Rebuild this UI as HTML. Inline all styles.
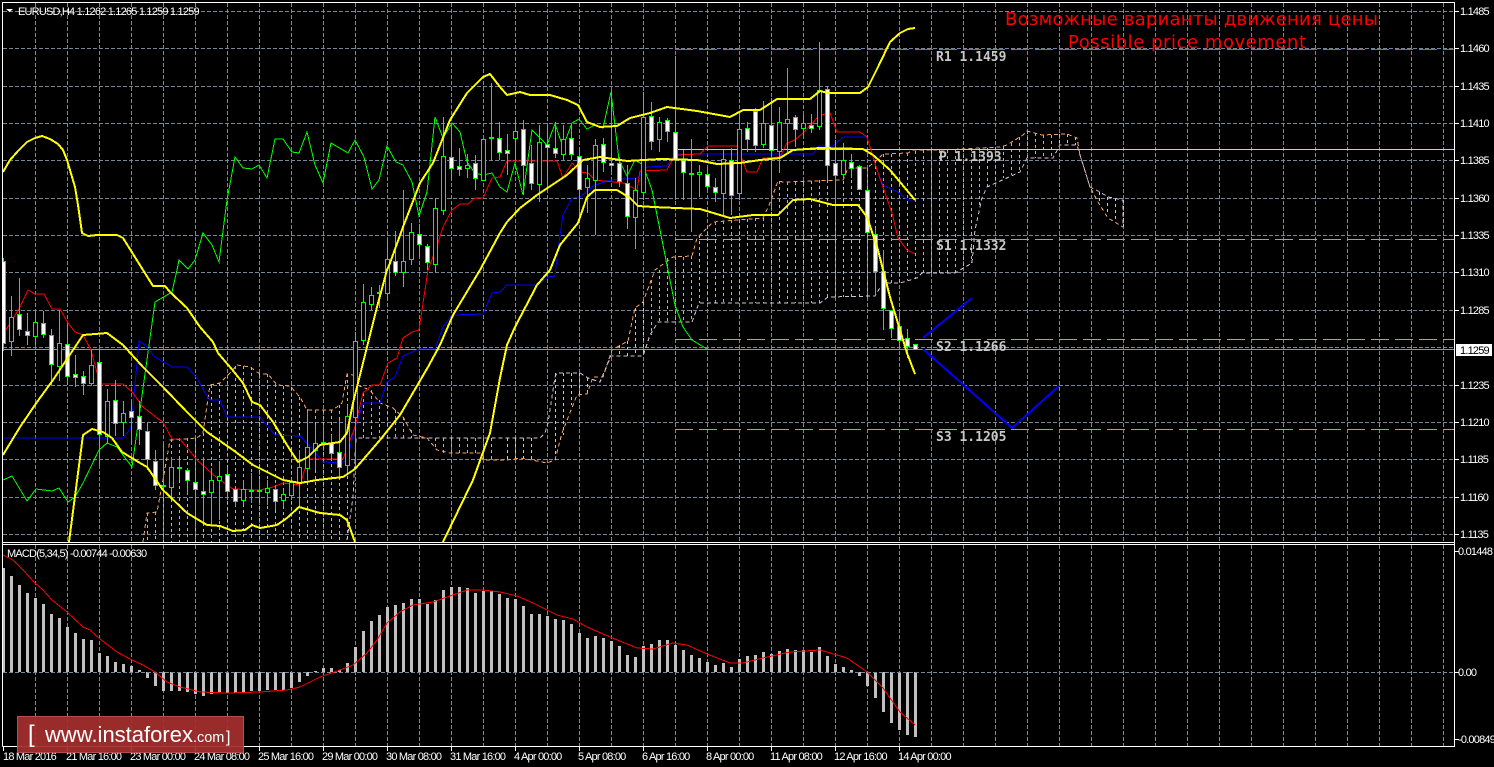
<!DOCTYPE html>
<html><head><meta charset="utf-8"><style>
html,body{margin:0;padding:0;background:#000;width:1494px;height:767px;overflow:hidden}
svg{display:block}
.ax{font:11px "Liberation Sans",sans-serif;fill:#fff;letter-spacing:-.8px}
.sr{font:bold 13px "DejaVu Sans Mono","Liberation Mono",monospace;fill:#c8c8c8}
</style></head><body>
<svg width="1494" height="767" viewBox="0 0 1494 767" xmlns="http://www.w3.org/2000/svg">
<defs><clipPath id="m"><rect x="3" y="3" width="1451" height="539"/></clipPath></defs>
<rect width="1494" height="767" fill="#000"/>
<!-- grid -->
<g fill="none" stroke="#778899" stroke-dasharray="4 2" shape-rendering="crispEdges">
<path d="M3 11.5H1454M3 48.5H1454M3 86.5H1454M3 123.5H1454M3 160.5H1454M3 198.5H1454M3 235.5H1454M3 272.5H1454M3 310.5H1454M3 347.5H1454M3 385.5H1454M3 422.5H1454M3 459.5H1454M3 497.5H1454M3 534.5H1454M3 672.5H1454"/>
<path d="M35.5 3V542M67.5 3V542M99.5 3V542M131.5 3V542M163.5 3V542M195.5 3V542M227.5 3V542M259.5 3V542M291.5 3V542M323.5 3V542M355.5 3V542M387.5 3V542M419.5 3V542M451.5 3V542M483.5 3V542M515.5 3V542M547.5 3V542M579.5 3V542M611.5 3V542M643.5 3V542M675.5 3V542M707.5 3V542M739.5 3V542M771.5 3V542M803.5 3V542M835.5 3V542M867.5 3V542M899.5 3V542M931.5 3V542M963.5 3V542M995.5 3V542M1027.5 3V542M1059.5 3V542M1091.5 3V542M1123.5 3V542M1155.5 3V542M1187.5 3V542M1219.5 3V542M1251.5 3V542M1283.5 3V542M1315.5 3V542M1347.5 3V542M1379.5 3V542M1411.5 3V542M1443.5 3V542"/>
<path d="M35.5 545V746M67.5 545V746M99.5 545V746M131.5 545V746M163.5 545V746M195.5 545V746M227.5 545V746M259.5 545V746M291.5 545V746M323.5 545V746M355.5 545V746M387.5 545V746M419.5 545V746M451.5 545V746M483.5 545V746M515.5 545V746M547.5 545V746M579.5 545V746M611.5 545V746M643.5 545V746M675.5 545V746M707.5 545V746M739.5 545V746M771.5 545V746M803.5 545V746M835.5 545V746M867.5 545V746M899.5 545V746M931.5 545V746M963.5 545V746M995.5 545V746M1027.5 545V746M1059.5 545V746M1091.5 545V746M1123.5 545V746M1155.5 545V746M1187.5 545V746M1219.5 545V746M1251.5 545V746M1283.5 545V746M1315.5 545V746M1347.5 545V746M1379.5 545V746M1411.5 545V746M1443.5 545V746"/>
</g>
<g clip-path="url(#m)" fill="none">
<!-- cloud hatch -->
<path stroke="#f4a460" stroke-dasharray="3 3" shape-rendering="crispEdges" d="M147.5 513V542M155.5 512V542M163.5 480V542M171.5 439V542M179.5 438V542M187.5 438V542M195.5 438V542M203.5 433V542M211.5 385V542M219.5 383V542M227.5 375V542M235.5 366V542M243.5 366V542M251.5 367V542M259.5 374V542M267.5 374V542M275.5 384V542M283.5 386V542M291.5 387V542M299.5 397V542M307.5 410V542M315.5 410V542M323.5 410V542M331.5 410V542M339.5 405V542M347.5 374V542M363.5 393V438M371.5 390V438M379.5 400V438M387.5 405V438M395.5 410V438M403.5 417V438M411.5 430V438M435.5 438V450M443.5 438V453M451.5 438V453M459.5 438V453M467.5 438V453M475.5 438V453M483.5 438V460M491.5 438V461M651.5 280V335M659.5 270V322M667.5 258V322M675.5 257V322M683.5 257V322M691.5 256V322M699.5 235V303M707.5 226V303M715.5 222V303M723.5 221V303M731.5 220V303M739.5 220V303M747.5 219V303M755.5 218V303M763.5 218V303M771.5 200V303M779.5 181V303M787.5 182V303M795.5 182V303M803.5 182V303M811.5 181V303M819.5 180V303M827.5 180V298M835.5 180V297M843.5 175V297M851.5 168V297M859.5 168V297M867.5 168V297M875.5 160V296M883.5 154V283M891.5 154V283M899.5 153V283M907.5 153V280M915.5 151V278M923.5 150V273M931.5 150V273M939.5 150V273M947.5 150V273M955.5 150V273M963.5 149V268M971.5 148V263M979.5 148V208M987.5 148V187M995.5 147V183M1003.5 146V178M1011.5 143V175M1019.5 137V172M1027.5 131V158M1035.5 133V158M1043.5 135V158M1051.5 135V158"/>
<path stroke="#d8bfd8" stroke-dasharray="3 3" shape-rendering="crispEdges" d="M507.5 438V460M515.5 438V460M523.5 438V458M531.5 438V460M555.5 373V460M563.5 373V435M571.5 373V405M579.5 373V395M587.5 378V394M619.5 345V356M627.5 341V356M635.5 308V356M643.5 302V356M1059.5 134V145M1067.5 134V145M1075.5 137V145M1099.5 192V203M1107.5 197V215M1115.5 198V222M1123.5 200V227"/>
<!-- cloud edges -->
<polyline stroke="#f4a460" stroke-dasharray="4 3" shape-rendering="crispEdges" points="143,542 147,513 157,512 163,480 170,440 197,438 203,433 210,385 220,383 230,373 237,365 250,367 260,374 268,374 277,385 290,386 300,397 307,410 333,410 342,403 347,374 353,375 357,385 370,390 380,403 393,408 403,417 413,435 427,438 437,450 450,453 480,453 483,460 507,460 520,458 532,460 547,463 555,460 562,433 577,395 587,394 593,377 603,377 612,350 628,341 635,308 643,302 655,270 673,257 692,256 697,238 713,222 763,218 770,203 778,181 783,182 843,180 848,168 867,168 877,160 883,154 908,153 913,150 943,150 1000,147 1007,145 1023,135 1027,131 1042,135 1067,134 1077,138 1080,155 1090,187 1098,202 1108,218 1123,227"/>
<polyline stroke="#d8bfd8" stroke-dasharray="4 3" shape-rendering="crispEdges" points="347,540 353,497 356,438 540,438 545,433 548,423 555,377 557,373 580,373 588,378 600,382 605,370 611,356 643,356 650,335 658,322 692,322 699,303 820,303 828,297 875,296 883,283 900,283 917,278 922,273 955,273 972,263 975,230 982,198 987,187 1020,172 1027,158 1053,158 1060,145 1077,145 1080,155 1090,187 1100,192 1108,197 1123,200 1123,227"/>
<!-- chikou -->
<polyline stroke="#00ff00" shape-rendering="crispEdges" points="3,480 12,476 27,501 36,489 52,491 59,488 68,502 75,497 83,483 99,450 107,443 117,447 132,467 140,410 155,302 172,292 177,270 179,260 188,269 195,260 203,233 212,245 219,262 227,200 235,157 243,168 252,169 259,165 267,178 275,139 283,139 292,152 299,153 307,132 315,165 323,183 331,143 348,153 355,140 364,157 372,189 379,180 387,146 396,162 403,165 412,182 419,216 427,192 435,117 443,138 452,123 460,132 467,162 475,173 483,175 492,173 500,187 507,192 515,163 523,195 532,130 539,137 547,145 555,124 563,147 572,123 579,119 587,129 595,125 603,128 611,92 619,160 627,176 635,160 643,165 652,190 668,270 675,305 683,327 692,340 707,349"/>
<!-- S/R levels -->
<path shape-rendering="crispEdges" stroke="#e2501e" stroke-dasharray="18 6" d="M675 49.5H1454"/>
<path shape-rendering="crispEdges" stroke="#b89a90" stroke-dasharray="18 6" d="M675 239.5H1454M675 339.5H1454M675 429.5H1454"/>
<path shape-rendering="crispEdges" stroke="#ffd700" d="M675 149.5H1454"/>
<path shape-rendering="crispEdges" stroke="#8f979f" d="M3 349.5H1454"/>
<!-- blue kijun -->
<polyline stroke="#0000ff" shape-rendering="crispEdges" points="3,438 123,438 131,428 139,341 145,345 155,357 172,367 187,367 197,378 205,393 210,400 220,400 227,417 260,417 275,435 300,436 315,452 323,462 340,463 347,460 355,427 363,403 380,403 387,382 395,377 403,356 419,349 435,349 443,327 452,315 483,314 492,293 500,292 507,285 538,285 548,277 555,276 557,257 563,215 572,198 580,197 595,185 610,180 637,178 647,167 667,166 675,154 813,154 819,146 833,146 843,137 867,137 877,170 883,185 898,192 908,200 915,200"/>
<!-- red tenkan -->
<polyline stroke="#ff0000" shape-rendering="crispEdges" points="6,330 20,307 28,290 35,294 44,294 52,309 60,309 68,323 75,332 83,335 91,350 100,384 123,384 133,393 143,407 157,418 163,422 172,439 180,439 197,460 217,478 233,489 260,490 273,487 283,483 300,485 308,459 343,459 355,427 363,393 372,385 380,385 388,363 397,358 403,338 412,332 419,330 425,290 428,270 433,257 438,243 443,227 452,210 460,204 468,204 475,198 483,198 492,178 500,177 507,161 557,161 563,178 572,163 580,172 588,173 595,180 623,183 637,190 640,171 667,170 675,155 700,154 708,146 737,146 747,172 757,172 763,158 780,157 787,143 795,140 803,133 820,115 830,113 837,132 860,132 867,137 877,170 883,187 892,213 898,238 907,250 915,254"/>
<!-- wicks -->
<path stroke="#00ff00" shape-rendering="crispEdges" d="M3.5 258V351M11.5 296V356M19.5 278V336M27.5 313V345M35.5 311V345M43.5 311V338M51.5 329V385M59.5 310V381M67.5 325V385M75.5 355V387M83.5 371V395M91.5 350V386M99.5 350V465M107.5 389V444M115.5 380V436M123.5 401V436M131.5 400V445M139.5 401V445M147.5 423V470M155.5 450V490M163.5 443V498M171.5 457V497M179.5 459V480M187.5 468V495M195.5 470V525M203.5 457V522M211.5 468V526M219.5 461V520M227.5 467V500M235.5 487V507M243.5 480V505M251.5 473V503M259.5 481V500M267.5 480V505M275.5 485V510M283.5 490V507M291.5 478V500M299.5 450V505M307.5 409V480M315.5 425V470M323.5 427V445M331.5 435V460M339.5 420V477M347.5 405V475M355.5 332V468M363.5 284V345M371.5 287V310M379.5 285V308M387.5 240V300M395.5 231V276M403.5 190V287M411.5 223V265M419.5 224V257M427.5 244V270M435.5 198V272M443.5 117V215M451.5 125V180M459.5 148V176M467.5 154V178M475.5 155V190M483.5 139V181M491.5 83V160M499.5 122V160M507.5 134V175M515.5 120V160M523.5 120V195M531.5 145V190M539.5 125V202M547.5 125V183M555.5 122V158M563.5 125V160M571.5 125V160M579.5 147V222M587.5 165V213M595.5 139V235M603.5 138V172M611.5 90V172M619.5 157V187M627.5 165V229M635.5 178V249M643.5 92V200M651.5 102V150M659.5 117V152M667.5 118V142M675.5 56V200M683.5 150V200M691.5 139V232M699.5 165V197M707.5 167V190M715.5 178V202M723.5 150V215M731.5 148V215M739.5 112V200M747.5 122V152M755.5 108V152M763.5 101V148M771.5 98V208M779.5 107V173M787.5 68V152M795.5 115V147M803.5 115V138M811.5 114V133M819.5 42V130M827.5 86V180M835.5 140V220M843.5 143V180M851.5 154V178M859.5 165V190M867.5 190V235M875.5 228V296M883.5 250V330M891.5 310V338M899.5 313V347M907.5 329V358M915.5 344V349"/>
<!-- black bodies -->
<path fill="#000" stroke="#00ff00" shape-rendering="crispEdges" d="M9.5 317.5h4V341.5h-4zM33.5 322.5h4V336.5h-4zM57.5 343.5h4V366.5h-4zM89.5 365.5h4V383.5h-4zM105.5 401.5h4V436.5h-4zM121.5 413.5h4V422.5h-4zM169.5 467.5h4V487.5h-4zM209.5 480.5h4V492.5h-4zM217.5 476.5h4V480.5h-4zM241.5 489.5h4V500.5h-4zM265.5 488.5h4V492.5h-4zM281.5 494.5h4V500.5h-4zM289.5 482.5h4V495.5h-4zM297.5 467.5h4V483.5h-4zM305.5 447.5h4V468.5h-4zM313.5 443.5h4V450.5h-4zM345.5 416.5h4V465.5h-4zM353.5 341.5h4V417.5h-4zM361.5 302.5h4V340.5h-4zM369.5 295.5h4V304.5h-4zM385.5 259.5h4V293.5h-4zM401.5 261.5h4V272.5h-4zM409.5 232.5h4V259.5h-4zM433.5 208.5h4V264.5h-4zM441.5 156.5h4V210.5h-4zM465.5 165.5h4V168.5h-4zM481.5 139.5h4V180.5h-4zM513.5 131.5h4V138.5h-4zM537.5 142.5h4V184.5h-4zM561.5 139.5h4V154.5h-4zM585.5 178.5h4V187.5h-4zM593.5 145.5h4V180.5h-4zM633.5 190.5h4V217.5h-4zM641.5 117.5h4V192.5h-4zM657.5 122.5h4V139.5h-4zM697.5 172.5h4V174.5h-4zM721.5 159.5h4V193.5h-4zM737.5 129.5h4V193.5h-4zM761.5 123.5h4V144.5h-4zM777.5 122.5h4V151.5h-4zM785.5 119.5h4V123.5h-4zM801.5 123.5h4V128.5h-4zM817.5 90.5h4V126.5h-4zM841.5 160.5h4V174.5h-4z"/>
<!-- white bodies -->
<path fill="#fff" stroke="#00ff00" shape-rendering="crispEdges" d="M1.5 261.5h4V343.5h-4zM17.5 314.5h4V329.5h-4zM25.5 331.5h4V335.5h-4zM41.5 323.5h4V334.5h-4zM49.5 335.5h4V364.5h-4zM65.5 344.5h4V376.5h-4zM73.5 374.5h4V377.5h-4zM81.5 376.5h4V383.5h-4zM97.5 362.5h4V434.5h-4zM113.5 400.5h4V423.5h-4zM129.5 411.5h4V417.5h-4zM137.5 416.5h4V429.5h-4zM145.5 431.5h4V459.5h-4zM153.5 461.5h4V485.5h-4zM185.5 470.5h4V480.5h-4zM193.5 482.5h4V489.5h-4zM201.5 491.5h4V494.5h-4zM225.5 474.5h4V491.5h-4zM233.5 489.5h4V501.5h-4zM273.5 489.5h4V501.5h-4zM329.5 443.5h4V453.5h-4zM337.5 452.5h4V467.5h-4zM393.5 261.5h4V272.5h-4zM417.5 234.5h4V244.5h-4zM425.5 246.5h4V262.5h-4zM449.5 157.5h4V168.5h-4zM457.5 166.5h4V169.5h-4zM473.5 163.5h4V178.5h-4zM497.5 138.5h4V152.5h-4zM505.5 150.5h4V153.5h-4zM521.5 129.5h4V165.5h-4zM529.5 163.5h4V183.5h-4zM545.5 144.5h4V147.5h-4zM553.5 148.5h4V153.5h-4zM569.5 138.5h4V154.5h-4zM577.5 156.5h4V189.5h-4zM601.5 144.5h4V162.5h-4zM609.5 163.5h4V165.5h-4zM617.5 163.5h4V181.5h-4zM625.5 183.5h4V216.5h-4zM649.5 116.5h4V141.5h-4zM665.5 120.5h4V131.5h-4zM673.5 132.5h4V159.5h-4zM681.5 160.5h4V172.5h-4zM705.5 174.5h4V186.5h-4zM713.5 187.5h4V192.5h-4zM729.5 160.5h4V195.5h-4zM745.5 128.5h4V139.5h-4zM753.5 111.5h4V145.5h-4zM769.5 125.5h4V150.5h-4zM793.5 117.5h4V129.5h-4zM809.5 125.5h4V128.5h-4zM825.5 89.5h4V165.5h-4zM833.5 163.5h4V175.5h-4zM849.5 162.5h4V168.5h-4zM857.5 166.5h4V189.5h-4zM865.5 190.5h4V232.5h-4zM873.5 234.5h4V271.5h-4zM881.5 271.5h4V308.5h-4zM889.5 310.5h4V328.5h-4zM897.5 326.5h4V340.5h-4zM905.5 338.5h4V346.5h-4zM913.5 344.5h4V349.5h-4z"/>
<!-- doji dashes -->
<path stroke="#00ff00" stroke-width="2" shape-rendering="crispEdges" d="M161 486H166M177 468H182M249 491H254M257 491H262M321 443H326M377 293H382M489 138H494M689 174H694"/>
<!-- yellow -->
<g stroke="#ffff00" stroke-width="2" stroke-linejoin="round" shape-rendering="crispEdges">
<polyline points="3,172 10,160 18,151 27,142 35,138 42,136 50,139 58,144 63,150 67,160 75,187 78,205 82,233 88,236 97,235 117,235 123,238 143,270 153,286 165,286 170,292 187,308 200,327 213,342 218,353 230,367 243,383 252,402 260,405 273,422 287,445 298,462 308,457 320,445 340,442 347,433 353,403 367,347 377,307 387,270 390,263 403,227 420,183 433,163 450,120 467,93 483,77 490,74 500,87 507,95 520,92 530,95 550,95 567,100 578,105 587,122 600,127 617,126 630,118 650,113 667,107 697,111 730,117 743,110 760,110 777,99 810,99 820,91 828,93 860,93 868,87 879,65 890,42 900,33 908,29 915,28"/>
<polyline points="69,542 83,435 92,429 103,432 112,438 122,452 140,463 147,467 163,490 187,513 207,525 220,526 233,531 245,530 252,525 260,528 277,525 287,518 299,507 320,513 340,515 347,520 355,542"/>
<polyline points="3,455 20,427 37,402 53,380 83,335 107,333 123,345 143,367 163,387 187,412 207,432 233,450 253,465 283,480 300,483 317,480 343,477 355,469 380,440 400,415 428,367 440,345 453,315 480,270 500,233 507,222 520,208 537,195 567,175 583,160 600,157 627,161 660,159 697,160 717,164 740,163 760,160 780,158 793,150 820,148 863,149 873,155 890,170 915,200"/>
<polyline points="443,542 473,480 490,433 500,378 507,345 515,327 537,285 550,270 560,245 578,223 587,197 595,190 617,190 630,198 638,206 653,207 700,209 730,218 753,215 778,215 793,200 810,199 833,205 858,205 867,217 878,250 890,297 900,330 907,353 915,374"/>
</g>
<!-- forecast -->
<g stroke="#0000ff" stroke-width="2"><polyline points="923,338 972,298"/><polyline points="923,349 1012,428 1059,386"/></g>
</g>
<!-- MACD bars -->
<path fill="none" stroke="#c0c0c0" stroke-width="3" shape-rendering="crispEdges" d="M3.5 672V568M11.5 672V576M19.5 672V585M27.5 672V593M35.5 672V598M43.5 672V604M51.5 672V614M59.5 672V618M67.5 672V627M75.5 672V633M83.5 672V639M91.5 672V640M99.5 672V653M107.5 672V656M115.5 672V662M123.5 672V664M131.5 672V666M139.5 672V670M147.5 672V678M155.5 672V686M163.5 672V691M171.5 672V691M179.5 672V691M187.5 672V692M195.5 672V694M203.5 672V696M211.5 672V694M219.5 672V692M227.5 672V693M235.5 672V693M243.5 672V692M251.5 672V691M259.5 672V691M267.5 672V690M275.5 672V690M283.5 672V690M291.5 672V688M299.5 672V682M307.5 672V676M315.5 672V671M323.5 672V668M331.5 672V668M339.5 672V670M347.5 672V663M355.5 672V647M363.5 672V631M371.5 672V621M379.5 672V615M387.5 672V607M395.5 672V605M403.5 672V603M411.5 672V599M419.5 672V599M427.5 672V604M435.5 672V600M443.5 672V590M451.5 672V587M459.5 672V587M467.5 672V588M475.5 672V593M483.5 672V591M491.5 672V591M499.5 672V594M507.5 672V598M515.5 672V599M523.5 672V606M531.5 672V614M539.5 672V614M547.5 672V616M555.5 672V619M563.5 672V620M571.5 672V624M579.5 672V633M587.5 672V638M595.5 672V636M603.5 672V638M611.5 672V641M619.5 672V646M627.5 672V655M635.5 672V657M643.5 672V646M651.5 672V644M659.5 672V640M667.5 672V640M675.5 672V645M683.5 672V650M691.5 672V655M699.5 672V658M707.5 672V662M715.5 672V665M723.5 672V663M731.5 672V667M739.5 672V659M747.5 672V656M755.5 672V655M763.5 672V652M771.5 672V654M779.5 672V651M787.5 672V649M795.5 672V650M803.5 672V650M811.5 672V652M819.5 672V647M827.5 672V656M835.5 672V664M843.5 672V667M851.5 672V670M859.5 672V676M867.5 672V686M875.5 672V698M883.5 672V712M891.5 672V723M899.5 672V730M907.5 672V735M915.5 672V737"/>
<path fill="none" stroke="#778899" stroke-dasharray="4 2" shape-rendering="crispEdges" d="M3 672.5H920"/>
<polyline fill="none" stroke="#ff0000" shape-rendering="crispEdges" points="3,555 13,560 23,570 35,583 43,590 52,600 67,612 83,627 90,630 100,639 117,652 132,660 143,665 155,672 167,682 180,687 200,692 227,693 260,692 287,690 300,687 320,677 340,670 353,665 367,653 377,640 387,623 400,612 413,605 433,602 450,596 467,590 483,590 500,592 517,596 533,603 557,615 573,619 587,627 610,637 637,648 653,649 673,643 687,645 707,654 730,663 743,663 763,658 790,652 820,650 847,658 867,672 883,688 900,712 915,725"/>
<!-- frame -->
<path fill="none" stroke="#fff" shape-rendering="crispEdges" d="M2.5 746.5V2.5H1454.5V746.5H2.5M2.5 542.5H1454.5M2.5 544.5H1454.5"/>
<path fill="none" stroke="#fff" shape-rendering="crispEdges" d="M1455 11.5h4M1455 48.5h4M1455 86.5h4M1455 123.5h4M1455 160.5h4M1455 198.5h4M1455 235.5h4M1455 272.5h4M1455 310.5h4M1455 385.5h4M1455 422.5h4M1455 459.5h4M1455 497.5h4M1455 534.5h4M1455 551.5h4M1455 672.5h4M1455 739.5h4M3.5 747v4M67.5 747v4M131.5 747v4M195.5 747v4M259.5 747v4M323.5 747v4M387.5 747v4M451.5 747v4M515.5 747v4M579.5 747v4M643.5 747v4M707.5 747v4M771.5 747v4M835.5 747v4M899.5 747v4"/>
<!-- axis text -->
<g class="ax">
<text x="1460" y="15">1.1485</text><text x="1460" y="52">1.1460</text><text x="1460" y="90">1.1435</text><text x="1460" y="127">1.1410</text><text x="1460" y="164">1.1385</text><text x="1460" y="202">1.1360</text><text x="1460" y="239">1.1335</text><text x="1460" y="276">1.1310</text><text x="1460" y="314">1.1285</text><text x="1460" y="389">1.1235</text><text x="1460" y="426">1.1210</text><text x="1460" y="463">1.1185</text><text x="1460" y="501">1.1160</text><text x="1460" y="538">1.1135</text>
<text x="1458" y="555">0.01448</text><text x="1458" y="676">0.00</text><text x="1458" y="743">-0.00849</text>
<text x="3" y="760">18 Mar 2016</text><text x="66" y="760">21 Mar 16:00</text><text x="130" y="760">23 Mar 00:00</text><text x="194" y="760">24 Mar 08:00</text><text x="258" y="760">25 Mar 16:00</text><text x="322" y="760">29 Mar 00:00</text><text x="386" y="760">30 Mar 08:00</text><text x="450" y="760">31 Mar 16:00</text><text x="514" y="760">4 Apr 00:00</text><text x="578" y="760">5 Apr 08:00</text><text x="642" y="760">6 Apr 16:00</text><text x="706" y="760">8 Apr 00:00</text><text x="770" y="760">11 Apr 08:00</text><text x="834" y="760">12 Apr 16:00</text><text x="898" y="760">14 Apr 00:00</text>
<text x="18" y="15">EURUSD,H4  1.1262 1.1265 1.1259 1.1259</text>
<text x="7" y="557">MACD(5,34,5) -0.00744 -0.00630</text>
</g>
<path d="M6 9h7l-3.5 3z" fill="#fff"/>
<rect x="1456" y="344" width="36" height="12" fill="#fff"/>
<text x="1460" y="354" class="ax" style="fill:#000">1.1259</text>
<!-- level labels -->
<g class="sr">
<text x="936" y="61">R1 1.1459</text><text x="939" y="161">P 1.1393</text><text x="936" y="250">S1 1.1332</text><text x="936" y="351">S2 1.1266</text><text x="936" y="441">S3 1.1205</text>
</g>
<!-- title -->
<g font-family="'DejaVu Sans','Liberation Sans',sans-serif" font-size="18" fill="#ff0000">
<text x="1005" y="25" textLength="373" lengthAdjust="spacing">Возможные варианты движения цены</text>
<text x="1068" y="48" textLength="238" lengthAdjust="spacing">Possible price movement</text>
</g>
<!-- badge -->
<rect x="17.5" y="716.5" width="226" height="36" fill="#a52e2e" fill-opacity=".93" stroke="#b55050"/>
<g font-family="'Liberation Sans',sans-serif" fill="#fff">
<text x="28" y="742" font-size="24">[</text>
<text x="45" y="742" font-size="22">www.instaforex<tspan font-size="14.5">.com</tspan></text>
<text x="226" y="742" font-size="16">]</text>
</g>
</svg>
</body></html>
